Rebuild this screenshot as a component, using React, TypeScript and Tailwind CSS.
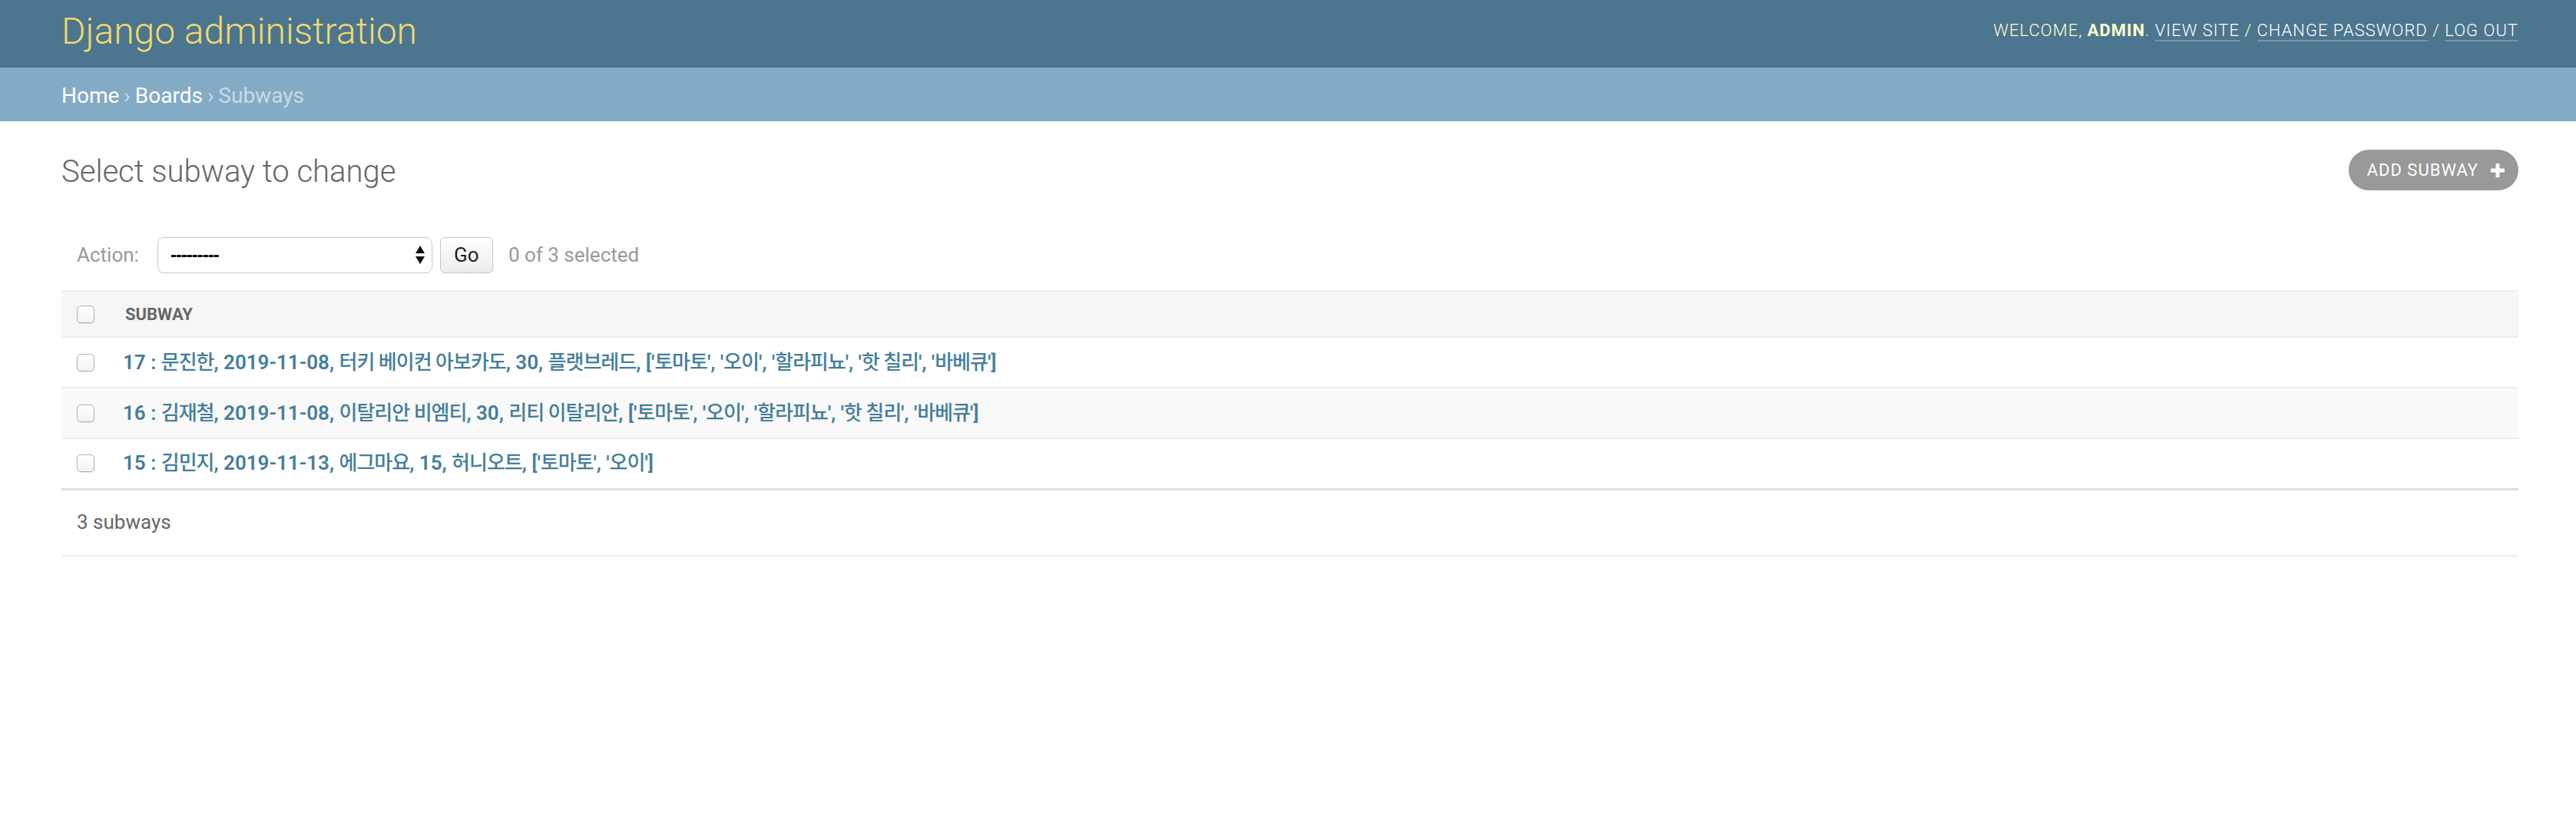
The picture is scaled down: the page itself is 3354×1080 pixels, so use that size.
import React from "react";

const ROWS = [
  "17 : 문진한, 2019-11-08, 터키 베이컨 아보카도, 30, 플랫브레드, ['토마토', '오이', '할라피뇨', '핫 칠리', '바베큐']",
  "16 : 김재철, 2019-11-08, 이탈리안 비엠티, 30, 리티 이탈리안, ['토마토', '오이', '할라피뇨', '핫 칠리', '바베큐']",
  "15 : 김민지, 2019-11-13, 에그마요, 15, 허니오트, ['토마토', '오이']",
];

// hangul runs are lighter than the latin/digit parts in the reference
function RowText({ text }: { text: string }) {
  const parts = text.split(/([\uAC00-\uD7A3]+(?: [\uAC00-\uD7A3]+)*)/);
  return (
    <>
      {parts.map((p, i) =>
        i % 2 === 1 ? (
          <span key={i} className="font-medium tracking-[-1px]">
            {p}
          </span>
        ) : (
          <span key={i} className="font-semibold">
            {p}
          </span>
        )
      )}
    </>
  );
}

function Checkbox() {
  return (
    <span className="inline-block h-[23px] w-[23px] rounded-[5px] border border-[#b0b0b0] bg-gradient-to-b from-white to-[#f2f2f2] shadow-[0_1px_1px_rgba(0,0,0,0.08)]" />
  );
}

export default function App() {
  return (
    <div className="min-h-screen bg-white font-['Roboto','Noto_Sans_CJK_KR',sans-serif] text-[#333]">
      <header className="flex h-[88px] items-center justify-between bg-[#4c758f] pl-20 pr-[75px]">
        <h1 className="-mt-[6px] text-[48px] font-light leading-none text-[#f2da6b]">
          Django administration
        </h1>
        <div className="-mt-[8px] text-[22px] font-light uppercase leading-[28px] tracking-[1px] text-[#ffffcc]">
          Welcome, <strong className="font-bold">admin</strong>.{" "}
          <a className="border-b-2 border-white/25 text-white">View site</a> /{" "}
          <a className="border-b-2 border-white/25 text-white">Change password</a> /{" "}
          <a className="border-b-2 border-white/25 text-white">Log out</a>
        </div>
      </header>

      <div className="flex h-[70px] items-center bg-[#84abc6] pl-20 pr-[75px] pt-[4px] text-[28px] text-[#c4dce8]">
        <a className="text-white">Home</a>
        <span className="mx-[6px]">›</span>
        <a className="text-white">Boards</a>
        <span className="mx-[6px]">›</span>
        <span>Subways</span>
      </div>

      <main className="pl-20 pr-[75px] pt-[40px]">
        <div className="flex items-center justify-between">
          <h1 className="text-[40px] font-light leading-[52px] text-[#666]">Select subway to change</h1>
          <a className="-mt-[5px] flex h-[53px] items-center gap-[14px] rounded-full bg-[#999] pl-[24px] pr-[16px] text-[22px] uppercase tracking-[1px] text-white">
            Add subway
            <svg width="22" height="22" viewBox="0 0 22 22">
              <path d="M8.5 2h5v6.5H20v5h-6.5V20h-5v-6.5H2v-5h6.5z" fill="#fff" />
            </svg>
          </a>
        </div>

        <div className="mt-[58px] flex h-[48px] items-center gap-[10px] px-[20px] text-[26px] text-[#999]">
          <label className="mr-[14px]">Action:</label>
          <div className="flex h-[47px] w-[358px] items-center justify-between rounded-[8px] border border-[#c8c8c8] bg-white pl-[16px] pr-[8px] text-[24px] text-black">
            <span className="font-['Liberation_Sans',sans-serif] font-bold tracking-[-1px]">---------</span>
            <svg width="14" height="30" viewBox="0 0 14 30">
              <path d="M7 3L13 13H1z" fill="#111" />
              <path d="M7 27L13 17H1z" fill="#111" />
            </svg>
          </div>
          <button className="flex h-[47px] w-[69px] items-center justify-center rounded-[6px] border border-[#c8c8c8] bg-gradient-to-b from-white to-[#ececec] text-[26px] text-[#222]">
            Go
          </button>
          <span className="ml-[10px]">0 of 3 selected</span>
        </div>

        <table className="mt-[22px] w-full border-collapse">
          <thead>
            <tr className="h-[60px] border-y-2 border-[#eeeeee] bg-[#f6f6f6]">
              <th className="w-[80px] pl-[20px] text-left align-middle">
                <div className="flex">
                  <Checkbox />
                </div>
              </th>
              <th className="text-left align-middle text-[22px] font-bold uppercase text-[#666]">
                <span className="pl-[3px]">Subway</span>
              </th>
            </tr>
          </thead>
          <tbody>
            {ROWS.map((r, i) => (
              <tr
                key={r}
                className={`h-[66px] ${i === ROWS.length - 1 ? "border-b-[3px] border-[#dddddd]" : "border-b-2 border-[#eeeeee]"} ${
                  i % 2 === 1 ? "bg-[#f9f9f9]" : "bg-white"
                }`}
              >
                <td className="pl-[20px] align-middle">
                  <div className="flex">
                    <Checkbox />
                  </div>
                </td>
                <th className="text-left align-middle text-[26px] font-normal text-[#447e9b]">
                  <RowText text={r} />
                </th>
              </tr>
            ))}
          </tbody>
        </table>

        <p className="flex h-[86px] items-center border-b-2 border-[#eeeeee] px-[20px] text-[26px] text-[#666]">
          3 subways
        </p>
      </main>
    </div>
  );
}
